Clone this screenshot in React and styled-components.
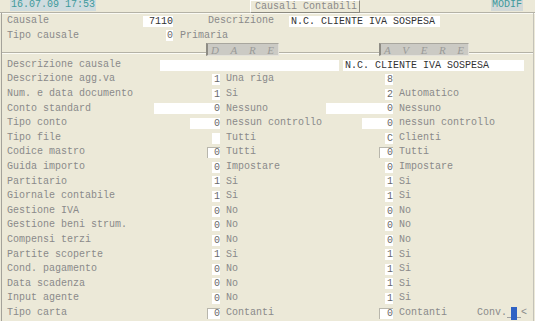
import React from "react";
import styled, { createGlobalStyle } from "styled-components";

const Global = createGlobalStyle`
  html, body { margin: 0; padding: 0; background: #ECE9D8; }
  body { font-family: "Liberation Mono", "DejaVu Sans Mono", monospace; font-size: 10px; }
`;

const Screen = styled.div`
  width: 535px;
  height: 321px;
  overflow: hidden;
  background: #ECE9D8;
  color: #8a8a8a;
  font-family: "Liberation Mono", monospace;
  font-size: 10px;
`;

const Header = styled.div`
  display: flex;
  align-items: flex-start;
  height: 12px;
  border-bottom: 1px solid #b4b2a6;
  box-shadow: 0 1px 0 #fafaf4;
  white-space: nowrap;
`;

const Clock = styled.div`
  margin-left: 10px;
  height: 11px;
  line-height: 10px;
  padding: 0 1px;
  background: #cfdcdf;
  color: #3f9a9c;
  width: 84px;
`;

const Title = styled.div`
  margin-left: 154px;
  height: 13px;
  line-height: 12px;
  box-sizing: border-box;
  padding: 0 0 0 4px;
  width: 110px;
  background: #ECE9D8;
  border: 1px solid #fff;
  border-right-color: #8c8a80;
  border-bottom-color: #8c8a80;
  color: #8a8a8a;
  white-space: nowrap;
  position: relative;
  z-index: 1;
`;

const Mode = styled.div`
  margin-left: auto;
  margin-right: 12px;
  height: 11px;
  line-height: 10px;
  padding: 0 1px;
  background: #d3d9d8;
  color: #3f9a9c;
`;

const Frame = styled.div`
  margin: 0 1px;
  border-left: 1px solid #a4a29a;
  border-right: 1px solid #c4c2b8;
  height: 308px;
  padding-left: 5px;
  padding-top: 1px;
`;

const Row = styled.div`
  display: grid;
  grid-template-columns: 213px 167px 1fr;
  column-gap: 6px;
  height: 14.6px;
  line-height: 14.6px;
  align-items: center;
  white-space: pre;
`;

const FreeRow = styled.div`
  display: flex;
  align-items: center;
  height: 14.6px;
  line-height: 14.6px;
  white-space: pre;
`;

const Cell = styled.div`
  display: flex;
  align-items: center;
  justify-content: space-between;
  height: 14.6px;
`;

const Box = styled.div`
  box-sizing: border-box;
  width: ${(p) => p.$w}px;
  height: 11px;
  line-height: 11px;
  background: #fff;
  color: ${(p) => (p.$dark ? "#333" : "#6a6a6a")};
  text-align: ${(p) => (p.$left ? "left" : "right")};
  padding: ${(p) => (p.$left ? "0 0 0 2px" : "0")};
  flex: none;
  margin-left: ${(p) => p.$ml || 0}px;
  ${(p) =>
    p.$inset &&
    `border-left: 1px solid #b8b6ac; border-top: 1px solid #b8b6ac; line-height: 10px;`}
`;

const Text = styled.span`
  margin-left: ${(p) => p.$ml || 0}px;
  color: #8a8a8a;
`;

const Band = styled.div`
  height: 14.6px;
  margin-left: -5px;
  display: flex;
  align-items: flex-start;
  background: linear-gradient(
    to bottom,
    transparent 9px,
    #b4b2a6 9px,
    #b4b2a6 10px,
    #fbfbf5 10px,
    #fbfbf5 11px,
    transparent 11px
  );
`;

const Tag = styled.div`
  box-sizing: border-box;
  display: flex;
  justify-content: space-between;
  margin-left: ${(p) => p.$ml}px;
  width: ${(p) => p.$w}px;
  height: 13px;
  line-height: 12px;
  background: #cbcac4;
  border-left: 2px solid #8e8c84;
  border-top: 1px solid #a8a69e;
  border-right: 1px solid #e4e2da;
  border-bottom: 1px solid #e4e2da;
  font-family: "Liberation Serif", serif;
  font-style: italic;
  font-size: 11px;
  color: #9a9a98;
  padding: 0 4px 0 3px;
`;

const Conv = styled.span`
  display: inline-flex;
  align-items: center;
  margin-left: 30px;
  color: #8a8a8a;
`;

const Blank = styled.span`
  display: inline-block;
  width: ${(p) => p.$w}px;
  height: 9px;
  border-bottom: 1px solid #a0a0a0;
`;

const Cursor = styled.span`
  display: inline-block;
  width: 6px;
  height: 13px;
  background: #2f62c4;
`;

const rows = [
  ["Descrizione agg.va", "1", 8, "Una riga", "8", 8, ""],
  ["Num. e data documento", "1", 8, "Si", "2", 8, "Automatico"],
  ["Conto standard", "0", 66, "Nessuno", "0", 67, "Nessuno"],
  ["Tipo conto", "0", 30, "nessun controllo", "0", 31, "nessun controllo"],
  ["Tipo file", "", 8, "Tutti", "C", 8, "Clienti"],
  ["Codice mastro", "0", 13, "Tutti", "0", 14, "Tutti", true],
  ["Guida importo", "0", 8, "Impostare", "0", 8, "Impostare"],
  ["Partitario", "1", 8, "Si", "1", 8, "Si"],
  ["Giornale contabile", "1", 8, "Si", "1", 8, "Si"],
  ["Gestione IVA", "0", 8, "No", "0", 8, "No"],
  ["Gestione beni strum.", "0", 8, "No", "0", 8, "No"],
  ["Compensi terzi", "0", 8, "No", "0", 8, "No"],
  ["Partite scoperte", "1", 8, "Si", "1", 8, "Si"],
  ["Cond. pagamento", "0", 8, "No", "1", 8, "Si"],
  ["Data scadenza", "0", 8, "No", "1", 8, "Si"],
  ["Input agente", "0", 8, "No", "1", 8, "Si"],
];

const Letters = ({ word }) => word.split("").map((c, i) => <span key={i}>{c}</span>);

export default function App() {
  return (
    <Screen>
      <Global />
      <Header>
        <Clock>16.07.09 17:53</Clock>
        <Title>Causali Contabili</Title>
        <Mode>MODIF</Mode>
      </Header>
      <Frame>
        <FreeRow>
          <Text>Causale</Text>
          <Box $w={30} $ml={94} $dark>7110</Box>
          <Text $ml={35}>Descrizione</Text>
          <Box $w={151} $ml={15} $left $dark>N.C. CLIENTE IVA SOSPESA</Box>
        </FreeRow>
        <FreeRow>
          <Text>Tipo causale</Text>
          <Box $w={7} $ml={87}>0</Box>
          <Text $ml={7}>Primaria</Text>
        </FreeRow>
        <Band>
          <Tag $ml={204} $w={73}><Letters word="DARE" /></Tag>
          <Tag $ml={100} $w={90}><Letters word="AVERE" /></Tag>
        </Band>
        <FreeRow>
          <Text>Descrizione causale</Text>
          <Box $w={179} $ml={39} />
          <Box $w={181} $ml={4} $left $dark>N.C. CLIENTE IVA SOSPESA</Box>
        </FreeRow>
        {rows.map(([label, dv, dw, dd, av, aw, ad, inset]) => (
          <Row key={label}>
            <Cell>
              <Text>{label}</Text>
              <Box $w={dw} $inset={inset}>{dv}</Box>
            </Cell>
            <Cell>
              <Text>{dd}</Text>
              <Box $w={aw} $inset={inset}>{av}</Box>
            </Cell>
            <Text>{ad}</Text>
          </Row>
        ))}
        <Row>
          <Cell>
            <Text>Tipo carta</Text>
            <Box $w={13} $inset>0</Box>
          </Cell>
          <Cell>
            <Text>Contanti</Text>
            <Box $w={14} $inset>0</Box>
          </Cell>
          <FreeRow>
            <Text>Contanti</Text>
            <Conv>
              Conv.
              <Blank $w={4} />
              <Cursor />
              <Blank $w={4} />
              &lt;
            </Conv>
          </FreeRow>
        </Row>
      </Frame>
    </Screen>
  );
}
